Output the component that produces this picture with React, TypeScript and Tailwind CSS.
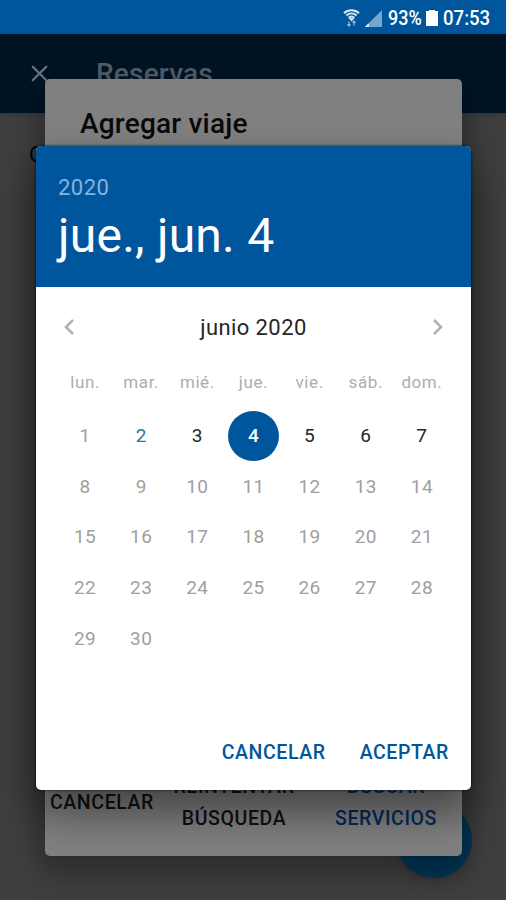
import { useState } from 'react';
import clsx from 'clsx';
import { X } from 'lucide-react';

const WEEKDAYS = ['lun.', 'mar.', 'mié.', 'jue.', 'vie.', 'sáb.', 'dom.'];
const DAYS = Array.from({ length: 30 }, (_, i) => i + 1);
const TODAY = 2;
const LAST_ENABLED = 7;

function StatusBar() {
    return (
        <div className="flex h-[34px] items-center justify-end bg-[#00569d] pt-[2px] pr-[16px] text-white">
            <svg className="mr-[5px] h-[20px] w-[17px]" viewBox="0 0 17 20" fill="none" stroke="#d5e6f5">
                <path d="M1 5.2C5 1.2 12 1.2 16 5.2M3.4 7.6c3-2.8 7.2-2.8 10.2 0M5.6 9.8c1.8-1.6 4-1.6 5.8 0" strokeWidth="2" />
                <path d="M5.5 10h6l-3 3.6z" fill="#d5e6f5" stroke="none" />
                <path d="M6 13.5v4.5M11 13v4.5M4.4 16.4L6 18l1.5-1.6M9.5 14.6L11 13l1.5 1.6" stroke="#8fb9de" strokeWidth="1.3" />
            </svg>
            <svg className="mr-[6px] h-[17px] w-[17px]" viewBox="0 0 18 18">
                <path d="M18 0v18H0z" fill="#75a6d0" />
                <path d="M4 14v4H0z" fill="#fff" />
            </svg>
            <span className="inline-block w-[35px] origin-left scale-x-[0.9] whitespace-nowrap text-[20px] font-medium leading-none">93%</span>
            <svg className="mr-[5px] ml-[3px] h-[18px] w-[12px]" viewBox="0 0 12 18" fill="#fff">
                <path d="M3 1h6v1h3v15H0V2h3z" />
            </svg>
            <span className="inline-block w-[47px] origin-left scale-x-[0.93] whitespace-nowrap text-[20px] font-medium leading-none">07:53</span>
        </div>
    );
}

function BookingsPage() {
    return (
        <div className="relative h-[866px] bg-[#3f3f3f]">
            <div className="flex h-[79px] items-center bg-[#001426] pl-[26px] shadow-md">
                <X className="h-[27px] w-[27px] text-[#6c7680]" strokeWidth={2} />
                <h1 className="ml-[43px] text-[28px] font-medium tracking-[0.2px] text-[#545d66]">Reservas</h1>
            </div>
            <p className="pt-[27px] pl-[29px] text-[22px] leading-[30px] text-black">Origen</p>
            <button className="absolute right-[34px] bottom-[22px] h-[76px] w-[76px] rounded-full bg-[#003657] shadow-lg" />
        </div>
    );
}

function TripDialog() {
    return (
        <div className="absolute top-[79px] left-[45px] flex h-[777px] w-[417px] flex-col justify-between rounded-[5px] bg-[#808080] shadow-[0_12px_28px_6px_rgba(0,0,0,0.3)]">
            <h2 className="pt-[28px] pl-[35px] text-[28px] font-medium leading-[34px] tracking-[0.2px] text-[#090909]">Agregar viaje</h2>
            <div className="flex items-center pb-[21px] pl-[5px] text-[19.5px] font-medium leading-[32px] tracking-[0.6px] text-[#101010]">
                <button className="w-[105px] text-left">CANCELAR</button>
                <button className="ml-[14px] w-[130px] text-center">REINTENTAR BÚSQUEDA</button>
                <button className="ml-[23px] w-[128px] text-center text-[#002b58]">BUSCAR SERVICIOS</button>
            </div>
        </div>
    );
}

function DatePicker() {
    const [selected, setSelected] = useState(4);

    return (
        <div className="absolute top-[146px] left-[36px] flex h-[644px] w-[435px] flex-col overflow-hidden rounded-[5px] bg-white">
            <div className="h-[141px] bg-[#00569d] pt-[28px] pl-[22px]">
                <p className="text-[22px] leading-[28px] tracking-[0.5px] text-[#86b3db]">2020</p>
                <p className="mt-[4px] text-[48px] leading-[60px] tracking-[0.25px] text-white">jue., jun. {selected}</p>
            </div>

            <div className="flex h-[81px] items-center justify-between pr-[27px] pb-px pl-[27px]">
                <svg className="h-[16px] w-[12px]" viewBox="0 0 12 16" fill="none" stroke="#b0b0b0" strokeWidth="2.5">
                    <path d="M10 1L3 8l7 7" />
                </svg>
                <span className="pt-px text-[22px] tracking-[0.4px] text-[#262626]">junio 2020</span>
                <svg className="h-[16px] w-[12px]" viewBox="0 0 12 16" fill="none" stroke="#b0b0b0" strokeWidth="2.5">
                    <path d="M2 1l7 7-7 7" />
                </svg>
            </div>

            <div className="grid grid-cols-7 px-[21px] text-center">
                {WEEKDAYS.map((day) => (
                    <span key={day} className="h-[42.6px] text-[17px] leading-[28px] tracking-[0.6px] text-[#adadad]">{day}</span>
                ))}
                {DAYS.map((day) => (
                    <button
                        key={day}
                        onClick={() => setSelected(day)}
                        disabled={day > LAST_ENABLED || day < TODAY}
                        className={clsx(
                            'mx-auto h-[50.6px] w-[50.6px] rounded-full pt-px text-[19px] tracking-[0.4px]',
                            day === selected && 'bg-[#00569d] font-medium text-white',
                            day !== selected && day === TODAY && 'text-[#2b7593]',
                            day !== selected && day > TODAY && day <= LAST_ENABLED && 'text-[#262626]',
                            (day > LAST_ENABLED || day < TODAY) && 'text-[#a0a0a0]',
                        )}
                    >
                        {day}
                    </button>
                ))}
            </div>

            <div className="mt-auto flex justify-end gap-[34px] pr-[22px] pb-[21px] text-[19.5px] font-medium leading-[32px] tracking-[0.6px] text-[#00569d]">
                <button>CANCELAR</button>
                <button>ACEPTAR</button>
            </div>
        </div>
    );
}

export default function App() {
    return (
        <div className="relative h-[900px] w-[506px] overflow-hidden font-['Roboto',sans-serif]">
            <StatusBar />
            <BookingsPage />
            <TripDialog />
            {/* dialog shadow is clipped so that it never reaches the status bar */}
            <div className="absolute inset-x-0 top-[34px] bottom-0 overflow-hidden">
                <div className="absolute top-[112px] left-[36px] h-[644px] w-[435px] rounded-[5px] shadow-[0_0_2px_1px_rgba(0,0,0,0.4),0_22px_40px_2px_rgba(0,0,0,0.45)]" />
            </div>
            <DatePicker />
        </div>
    );
}
